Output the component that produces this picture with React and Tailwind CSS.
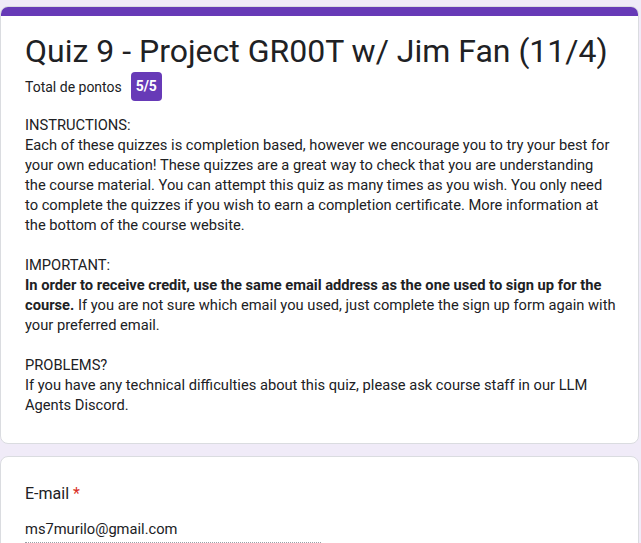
export default function App() {
  return (
    <div className="min-h-[543px] w-[641px] overflow-hidden bg-[#f0ebf8] pt-[6px] font-['Roboto',sans-serif] text-[#202124]">
      <div className="w-[639px] overflow-hidden rounded-lg border border-[#dadce0] bg-white">
        <div className="-mx-px -mt-px h-[10px] bg-[#673ab7]" />
        <div className="pl-6 pr-4 pb-[28px] pt-[15px]">
          <h1 className="text-[32px] leading-[40px] font-normal">Quiz 9 - Project GR00T w/ Jim Fan (11/4)</h1>
          <div className="mt-px flex items-center gap-[9px]">
            <span className="text-[14px] leading-5">Total de pontos</span>
            <span className="flex h-[29px] w-[31px] items-center justify-center rounded bg-[#673ab7] text-[14px] font-bold text-white">5/5</span>
          </div>
          <div className="mt-[14px] text-[14.7px] leading-5">
            <p>INSTRUCTIONS:</p>
            <p>
              Each of these quizzes is completion based, however we encourage you to try your best for<br />
              your own education! These quizzes are a great way to check that you are understanding<br />
              the course material. You can attempt this quiz as many times as you wish. You only need<br />
              to complete the quizzes if you wish to earn a completion certificate. More information at<br />
              the bottom of the course website.
            </p>
            <p className="h-5" />
            <p>IMPORTANT:</p>
            <p>
              <span className="font-bold">In order to receive credit, use the same email address as the one used to sign up for the<br />course.</span> If you are not sure which email you used, just complete the sign up form again with<br />
              your preferred email.
            </p>
            <p className="h-5" />
            <p>PROBLEMS?</p>
            <p>
              If you have any technical difficulties about this quiz, please ask course staff in our LLM<br />
              Agents Discord.
            </p>
          </div>
        </div>
      </div>
      <div className="mt-[12px] w-[639px] rounded-lg border border-[#dadce0] bg-white px-6 pt-[25px] pb-6">
        <div className="text-[16px] leading-6">
          E-mail <span className="text-[#d93025]">*</span>
        </div>
        <div className="mt-[13px] w-[296px] border-b border-dotted border-[#9aa0a6] pb-[3px] text-[14.7px] leading-5">ms7murilo@gmail.com</div>
      </div>
    </div>
  );
}
